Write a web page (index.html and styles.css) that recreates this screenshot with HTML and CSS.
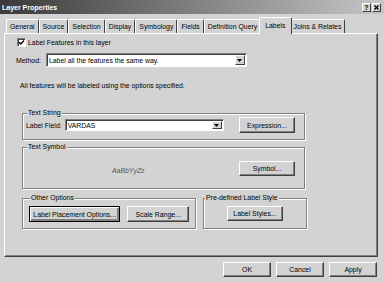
FILE: index.html
```html
<!DOCTYPE html>
<html lang="en">
<head>
  <meta charset="UTF-8" />
  <title>Layer Properties</title>
  <link rel="stylesheet" href="styles.css">
</head>
<body>

  <div class="window">
    <div class="titlebar">
      <span class="title">Layer Properties</span>
      <div class="caption-btns">
        <span class="cap-btn">?</span>
        <span class="cap-btn">
          <svg width="5" height="5" viewBox="0 0 5 5"><path d="M0.5 0.5L4.5 4.5M4.5 0.5L0.5 4.5" stroke="#000" stroke-width="1.3"/></svg>
        </span>
      </div>
    </div>

    <div class="tabs">
      <span class="tab">General</span>
      <span class="tab">Source</span>
      <span class="tab">Selection</span>
      <span class="tab">Display</span>
      <span class="tab">Symbology</span>
      <span class="tab">Fields</span>
      <span class="tab">Definition Query</span>
      <span class="tab active">Labels</span>
      <span class="tab">Joins &amp; Relates</span>
    </div>

    <div class="panel">
      <div class="check-row">
        <span class="checkbox">
          <svg width="7" height="7" viewBox="0 0 7 7"><path d="M1 3.2L2.8 5L6 1.6" fill="none" stroke="#000" stroke-width="1.4"/></svg>
        </span>
        <span>Label Features in this layer</span>
      </div>

      <div class="method-row">
        <span>Method:</span>
        <div class="combo method-combo">
          <span class="combo-text">Label all the features the same way.</span>
          <span class="combo-arrow"><svg width="5" height="3" viewBox="0 0 5 3"><path d="M0 0H5L2.5 3Z" fill="#000"/></svg></span>
        </div>
      </div>

      <p class="info">All features will be labeled using the options specified.</p>

      <fieldset class="group text-string">
        <legend>Text String</legend>
        <div class="field-row">
          <span>Label Field:</span>
          <div class="combo field-combo">
            <span class="combo-text">VARDAS</span>
            <span class="combo-arrow"><svg width="5" height="3" viewBox="0 0 5 3"><path d="M0 0H5L2.5 3Z" fill="#000"/></svg></span>
          </div>
          <button class="btn side-btn">Expression...</button>
        </div>
      </fieldset>

      <fieldset class="group text-symbol">
        <legend>Text Symbol</legend>
        <div class="field-row">
          <span class="preview">AaBbYyZz</span>
          <button class="btn side-btn symbol-btn">Symbol...</button>
        </div>
      </fieldset>

      <div class="group-row">
        <fieldset class="group other-options">
          <legend>Other Options</legend>
          <div class="btn-row">
            <button class="btn default placement-btn">Label Placement Options...</button>
            <button class="btn scale-btn">Scale Range...</button>
          </div>
        </fieldset>
        <fieldset class="group label-style">
          <legend>Pre-defined Label Style</legend>
          <div class="btn-row centered">
            <button class="btn styles-btn">Label Styles...</button>
          </div>
        </fieldset>
      </div>
    </div>

    <div class="footer">
      <button class="btn footer-btn">OK</button>
      <button class="btn footer-btn">Cancel</button>
      <button class="btn footer-btn">Apply</button>
    </div>
  </div>

</body>
</html>
```

FILE: styles.css
```css
body {
  margin: 0;
  font-family: "Liberation Sans", Arial, sans-serif;
  font-size: 6.9px;
  color: #000;
  background: #d3d3d3;
}
.window {
  width: 384px;
  height: 282px;
  background: #d3d3d3;
  display: flex;
  flex-direction: column;
  overflow: hidden;
}

/* title bar */
.titlebar {
  height: 14px;
  flex: none;
  box-sizing: border-box;
  display: flex;
  align-items: center;
  justify-content: space-between;
  padding: 0 3px 0 2px;
  background: linear-gradient(to right, #3a3a3a, #c6c6c6);
}
.title {
  color: #fff;
  font-weight: bold;
  font-size: 7px;
}
.caption-btns {
  display: flex;
  gap: 1px;
}
.cap-btn {
  width: 9px;
  height: 9px;
  box-sizing: border-box;
  background: #d3d3d3;
  border: 1px solid;
  border-color: #fff #404040 #404040 #fff;
  display: flex;
  align-items: center;
  justify-content: center;
  font-weight: bold;
  font-size: 7px;
  line-height: 1;
}

/* tabs */
.tabs {
  height: 19px;
  flex: none;
  box-sizing: border-box;
  display: flex;
  align-items: flex-end;
  padding-left: 6px;
}
.tab {
  height: 14px;
  box-sizing: border-box;
  display: flex;
  align-items: center;
  padding: 0 3px;
  border-top: 1px solid #fff;
  border-left: 1px solid #fff;
  border-right: 1px solid #404040;
  border-radius: 2px 2px 0 0;
  white-space: nowrap;
}
.tab.active {
  height: 17px;
  margin: 0 -2px -1px;
  padding: 0 5px 2px;
  background: #d3d3d3;
  position: relative;
  z-index: 1;
}

/* main panel */
.panel {
  flex: none;
  margin-left: 4px;
  width: 374px;
  height: 224px;
  box-sizing: border-box;
  border: 1px solid;
  border-color: #fff #404040 #404040 #fff;
  box-shadow: inset -1px -1px #808080;
  padding: 4px 0 0 11px;
  display: flex;
  flex-direction: column;
  align-items: flex-start;
}
.check-row {
  display: flex;
  align-items: center;
  gap: 2px;
  margin-left: 1px;
  height: 9px;
}
.checkbox {
  width: 9px;
  height: 9px;
  box-sizing: border-box;
  background: #fff;
  border: 1px solid;
  border-color: #808080 #fff #fff #808080;
  box-shadow: inset 1px 1px #404040;
  display: flex;
  align-items: center;
  justify-content: center;
}
.method-row {
  display: flex;
  align-items: center;
  gap: 5px;
  margin-top: 6px;
}
.combo {
  display: flex;
  box-sizing: border-box;
  background: #fff;
  border: 1px solid;
  border-color: #808080 #fff #fff #808080;
  box-shadow: inset 1px 1px #404040;
  padding: 1px 1px 1px 2px;
}
.combo-text {
  flex: 1;
  display: flex;
  align-items: center;
  white-space: nowrap;
}
.combo-arrow {
  width: 10px;
  box-sizing: border-box;
  background: #d3d3d3;
  border: 1px solid;
  border-color: #fff #404040 #404040 #fff;
  display: flex;
  align-items: center;
  justify-content: center;
}
.method-combo {
  width: 201px;
  height: 14px;
}
.field-combo {
  width: 159px;
  height: 12px;
}
.info {
  margin: 15px 0 0 4px;
  line-height: 8px;
}

/* group boxes */
.group {
  margin: 0 0 0 6px;
  box-sizing: border-box;
  border: 1px solid #808080;
  box-shadow: 1px 1px 0 #fff, inset 1px 1px 0 #fff;
  min-width: 0;
}
.group legend {
  margin-left: 1px;
  padding: 0 1px;
  line-height: 8px;
  background: #d3d3d3;
}
.text-string {
  width: 283px;
  margin-top: 19px;
  padding: 0 9px 6px 3px;
}
.text-symbol {
  width: 283px;
  margin-top: 3px;
  padding: 10px 9px 12px 3px;
}
.field-row {
  display: flex;
  align-items: center;
  gap: 3px;
}
.preview {
  align-self: flex-end;
  padding-left: 86px;
  line-height: 8px;
  margin-bottom: 1px;
  font-style: italic;
  color: #555;
}
.group-row {
  display: flex;
  gap: 7px;
  margin: 5px 0 0 6px;
}
.group-row .group {
  margin: 0;
}
.other-options {
  width: 174px;
  padding: 4px 6px 6px;
}
.label-style {
  width: 104px;
  padding: 4px 0 7px;
}
.btn-row {
  display: flex;
  gap: 7px;
}
.btn-row.centered {
  justify-content: center;
}

/* buttons */
.btn {
  font: inherit;
  color: #000;
  background: #d3d3d3;
  box-sizing: border-box;
  border: 1px solid;
  border-color: #fff #404040 #404040 #fff;
  box-shadow: inset -1px -1px #808080;
  padding: 0;
  white-space: nowrap;
}
.btn.default {
  border-color: #000;
  box-shadow: inset 1px 1px #fff, inset -2px -2px #808080;
}
.side-btn {
  margin-left: auto;
  width: 56px;
  height: 16px;
}
.symbol-btn {
  height: 15px;
}
.placement-btn {
  width: 92px;
  height: 16px;
}
.scale-btn {
  width: 62px;
  height: 16px;
}
.styles-btn {
  width: 56px;
  height: 15px;
}

.footer {
  display: flex;
  justify-content: flex-end;
  gap: 5px;
  padding: 5px 7px 0 0;
}
.footer-btn {
  width: 48px;
  height: 15px;
}
```
